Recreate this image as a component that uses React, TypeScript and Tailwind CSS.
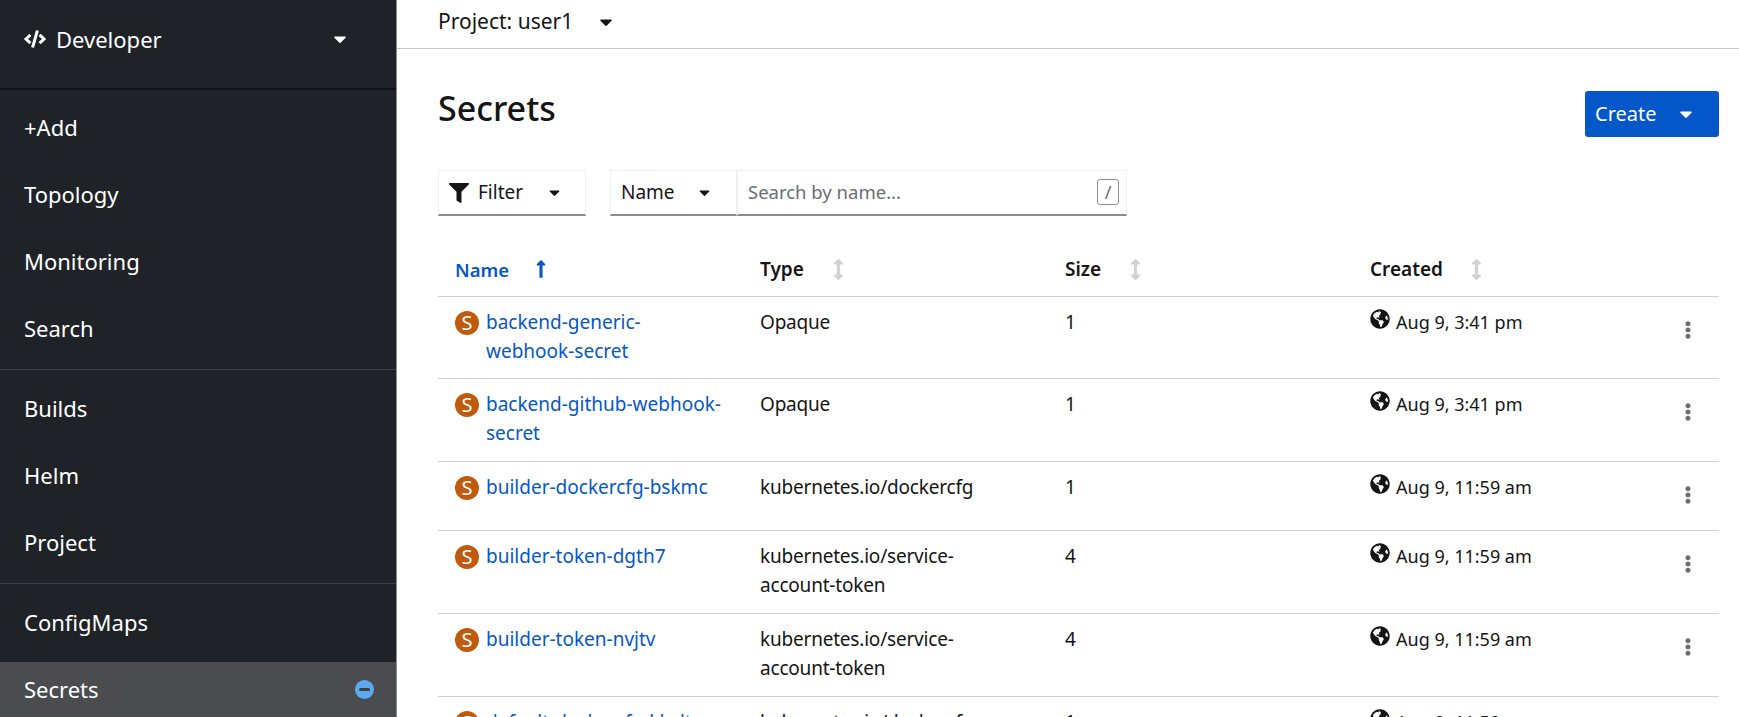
import { FaCaretDown, FaCode, FaFilter, FaGlobeAmericas, FaEllipsisV, FaLongArrowAltUp, FaArrowsAltV } from "react-icons/fa";

const navGroups = [
  ["+Add", "Topology", "Monitoring", "Search"],
  ["Builds", "Helm", "Project"],
  ["ConfigMaps"],
];

const rows = [
  { name: "backend-generic-webhook-secret", type: "Opaque", size: "1", created: "Aug 9, 3:41 pm", h: "h-[82px]" },
  { name: "backend-github-webhook-secret", type: "Opaque", size: "1", created: "Aug 9, 3:41 pm", h: "h-[83px]" },
  { name: "builder-dockercfg-bskmc", type: "kubernetes.io/dockercfg", size: "1", created: "Aug 9, 11:59 am", h: "h-[69px]" },
  { name: "builder-token-dgth7", type: "kubernetes.io/service-account-token", size: "4", created: "Aug 9, 11:59 am", h: "h-[83px]" },
  { name: "builder-token-nvjtv", type: "kubernetes.io/service-account-token", size: "4", created: "Aug 9, 11:59 am", h: "h-[83px]" },
  { name: "default-dockercfg-kbzlt", type: "kubernetes.io/dockercfg", size: "1", created: "Aug 9, 11:59 am", h: "h-[69px]" },
];

function Sidebar() {
  return (
    <aside className="w-[396px] shrink-0 bg-[#1f2327] text-white text-[22px]">
      <div className="h-[90px] flex items-center justify-between pl-6 pr-[46px] pb-[10px] border-b-2 border-[#101214]">
        <div className="flex items-center gap-[10px]">
          <FaCode size={22} />
          <span>Developer</span>
        </div>
        <FaCaretDown size={20} />
      </div>
      {navGroups.map((group, i) => (
        <div key={i} className={i > 0 ? "border-t border-[#3c3f42] pt-[5px] pb-[7px]" : "pt-[4px] pb-[7px]"}>
          {group.map((item) => (
            <div key={item} className="h-[67px] flex items-center pl-6">
              {item}
            </div>
          ))}
        </div>
      ))}
      <div className="-mt-[1px] h-[55px] flex items-center justify-between pl-6 pr-[22px] bg-[#4a4c50]">
        <span>Secrets</span>
        <span className="w-[19px] h-[19px] rounded-full bg-[#5ba9f0] flex items-center justify-center">
          <span className="w-[11px] h-[3px] bg-[#3c3f42] rounded-sm" />
        </span>
      </div>
    </aside>
  );
}

function SecretRow({ row }: { row: (typeof rows)[number] }) {
  return (
    <tr className={`${row.h} border-b border-[#d2d2d2] align-top`}>
      <td className="pl-[17px] pr-[19px] pt-[11px]">
        <div className="flex items-start gap-[7px]">
          <span className="mt-[3px] w-6 h-6 shrink-0 rounded-full bg-[#c05a0c] text-white text-[20px] leading-6 text-center">S</span>
          <a className="text-[#0657c7]">{row.name}</a>
        </div>
      </td>
      <td className="pl-[18px] pr-6 pt-[11px] tracking-[-0.2px]">{row.type}</td>
      <td className="pl-[18px] pt-[11px]">{row.size}</td>
      <td className="pl-[18px] pt-[11px]">
        <div className="flex items-start gap-[6px]">
          <FaGlobeAmericas size={20} className="mt-[1px] shrink-0" />
          <span className="text-[18px]">{row.created}</span>
        </div>
      </td>
      <td className="pt-[24px] pr-[22px]">
        <FaEllipsisV size={18} className="ml-auto text-[#6a6e73]" />
      </td>
    </tr>
  );
}

export default function App() {
  return (
    <div className="h-[717px] w-[1739px] overflow-hidden flex font-['Noto_Sans',sans-serif] text-[#151515]">
      <Sidebar />
      <main className="flex-1 min-w-0 border-l border-[#8a8d90]">
        <div className="h-[49px] border-b border-[#c7c7c7] flex items-center pl-[41px] pb-[4px] text-[21px] gap-[23px]">
          <span>Project: user1</span>
          <FaCaretDown size={20} />
        </div>
        <div className="pl-[41px] pr-5">
          <div className="h-[121px] flex items-start justify-between pt-[42px]">
            <h1 className="-mt-[2px] text-[34px] leading-[38px] font-medium">Secrets</h1>
            <button className="w-[134px] h-[46px] bg-[#0457c8] rounded-[3px] text-white text-[20px] flex items-center justify-between pl-[10px] pr-[23px]">
              Create
              <FaCaretDown size={20} />
            </button>
          </div>
          <div className="flex gap-6 text-[19px]">
            <div className="w-[148px] h-[46px] border border-[#f0f0f0] border-b-2 border-b-[#8a8d90] flex items-center pl-[10px]">
              <FaFilter size={20} />
              <span className="ml-[9px]">Filter</span>
              <FaCaretDown size={17} className="ml-[23px]" />
            </div>
            <div className="flex">
              <div className="w-[127px] h-[46px] border border-[#f0f0f0] border-b-2 border-b-[#8a8d90] flex items-center justify-between pl-[10px] pr-[23px]">
                <span>Name</span>
                <FaCaretDown size={17} />
              </div>
              <div className="w-[390px] h-[46px] border border-[#f0f0f0] border-b-2 border-b-[#8a8d90] flex items-center justify-between pl-[10px] pr-[7px] pb-[1px] text-[#6a6e73] text-[18.5px]">
                <span>Search by name...</span>
                <span className="w-[22px] h-[26px] border border-[#8a8d90] rounded-[3px] flex items-center justify-center text-[18px]">/</span>
              </div>
            </div>
          </div>
          <table className="mt-[27px] w-[1281px] table-fixed text-[19px] leading-[29px]">
            <thead>
              <tr className="h-[53px] border-b border-[#d2d2d2] text-left text-[19px] font-semibold">
                <th className="w-[304px] pl-[17px] font-semibold text-[18.5px] text-[#0657c7]">
                  <div className="flex items-center gap-[22px]">Name <FaLongArrowAltUp size={20} /></div>
                </th>
                <th className="w-[305px] pl-[18px] font-semibold">
                  <div className="flex items-center gap-[24px]">Type <FaArrowsAltV size={21} className="text-[#d2d2d2]" /></div>
                </th>
                <th className="w-[305px] pl-[18px] font-semibold">
                  <div className="flex items-center gap-[24px]">Size <FaArrowsAltV size={21} className="text-[#d2d2d2]" /></div>
                </th>
                <th className="w-[305px] pl-[18px] font-semibold">
                  <div className="flex items-center gap-[23px]">Created <FaArrowsAltV size={21} className="text-[#d2d2d2]" /></div>
                </th>
                <th />
              </tr>
            </thead>
            <tbody>
              {rows.map((row) => (
                <SecretRow key={row.name} row={row} />
              ))}
            </tbody>
          </table>
        </div>
      </main>
    </div>
  );
}
